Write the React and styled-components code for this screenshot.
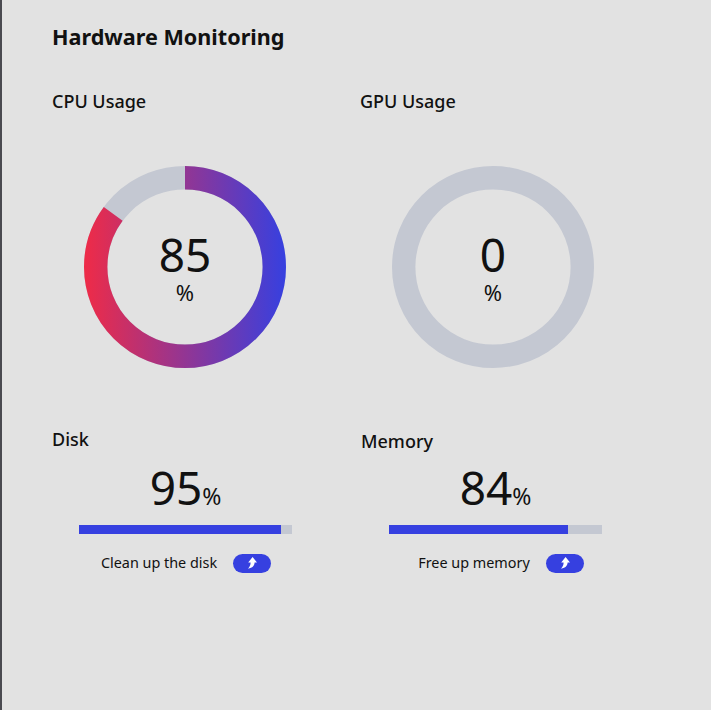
import React from 'react';
import styled, { createGlobalStyle } from 'styled-components';

const GlobalStyle = createGlobalStyle`
  html, body {
    margin: 0;
    padding: 0;
    background: #e2e2e2;
    font-family: "Noto Sans", "Open Sans", sans-serif;
    color: #111;
  }
`;

const Page = styled.div`
  box-sizing: border-box;
  width: 711px;
  height: 710px;
  overflow: hidden;
  background: #e2e2e2;
  border-left: 2px solid #4a4a50;
  padding: 21px 0 0 50px;
`;

const Title = styled.h1`
  margin: 0;
  font-size: 21.6px;
  line-height: 32px;
  font-weight: 700;
`;

const Grid = styled.div`
  display: grid;
  grid-template-columns: 308px 308px;
  margin-top: 36px;
`;

const Heading = styled.h2`
  margin: ${props => props.$top || 0}px 0 0;
  font-size: 18px;
  line-height: 24px;
  font-weight: 500;
`;

const RingCell = styled.section`
  height: 338px;
`;

const RingWrap = styled.div`
  position: relative;
  width: 202px;
  height: 202px;
  margin: 53px 0 0 32px;
`;

const RingLabel = styled.div`
  position: absolute;
  inset: 0;
  display: flex;
  flex-direction: column;
  align-items: center;
  justify-content: center;
`;

const RingValue = styled.div`
  font-size: 46px;
  line-height: 50px;
`;

const RingUnit = styled.div`
  font-size: 22px;
  line-height: 26px;
`;

const StatCell = styled.section`
  padding-left: ${props => props.$nudge}px;
`;

const StatValue = styled.div`
  display: flex;
  justify-content: center;
  align-items: baseline;
  width: 213px;
  margin: ${props => props.$top}px 0 0 ${props => props.$inset}px;
  font-size: 46px;
  line-height: 54px;
`;

const StatUnit = styled.span`
  font-size: 23px;
`;

const Bar = styled.div`
  width: 213px;
  height: 9px;
  margin: 2px 0 0 ${props => props.$inset}px;
  background: #c4c8d2;
`;

const BarFill = styled.div`
  height: 100%;
  background: #3640e0;
`;

const ActionRow = styled.div`
  display: flex;
  justify-content: center;
  align-items: center;
  gap: 16px;
  width: 213px;
  margin: 19px 0 0 ${props => props.$inset}px;
  font-size: 14.4px;
  line-height: 20px;
`;

const ActionButton = styled.button`
  display: flex;
  align-items: center;
  justify-content: center;
  width: 38px;
  height: 19px;
  padding: 0;
  border: 0;
  border-radius: 10px;
  background: #3640e0;
`;

const SIZE = 202;
const STROKE = 23.4;
const RADIUS = (SIZE - STROKE) / 2;
const CIRC = 2 * Math.PI * RADIUS;

function Ring({ id, value }) {
  return (
    <RingWrap>
      <svg width={SIZE} height={SIZE} viewBox={`0 0 ${SIZE} ${SIZE}`}>
        <defs>
          {/* the arc is rotated -90deg, so y here runs left to right on screen */}
          <linearGradient id={id} gradientUnits="userSpaceOnUse" x1="0" y1="0" x2="0" y2={SIZE}>
            <stop offset="0" stopColor="#ef2b47" />
            <stop offset="1" stopColor="#3640e0" />
          </linearGradient>
        </defs>
        <circle cx={SIZE / 2} cy={SIZE / 2} r={RADIUS} fill="none" stroke="#c4c8d2" strokeWidth={STROKE} />
        {value > 0 && (
          <circle
            cx={SIZE / 2}
            cy={SIZE / 2}
            r={RADIUS}
            fill="none"
            stroke={`url(#${id})`}
            strokeWidth={STROKE}
            strokeDasharray={`${(CIRC * value) / 100} ${CIRC}`}
            transform={`rotate(-90 ${SIZE / 2} ${SIZE / 2})`}
          />
        )}
      </svg>
      <RingLabel>
        <RingValue>{value}</RingValue>
        <RingUnit>%</RingUnit>
      </RingLabel>
    </RingWrap>
  );
}

function ArrowIcon() {
  return (
    <svg width="10" height="12" viewBox="0 0 10 12">
      <path d="M5.6 0 L10 5.6 L7.6 5.6 C7.6 8.6 5.6 11 1 11.8 C2.8 10 3.6 8 3.6 5.6 L1.2 5.6 Z" fill="#fff" />
    </svg>
  );
}

function Stat({ title, value, action, nudge, headingTop, valueTop, inset, actionInset }) {
  return (
    <StatCell $nudge={nudge}>
      <Heading $top={headingTop}>{title}</Heading>
      <StatValue $top={valueTop} $inset={inset}>
        {value}
        <StatUnit>%</StatUnit>
      </StatValue>
      <Bar $inset={inset}>
        <BarFill style={{ width: `${value}%` }} />
      </Bar>
      <ActionRow $inset={actionInset}>
        {action}
        <ActionButton>
          <ArrowIcon />
        </ActionButton>
      </ActionRow>
    </StatCell>
  );
}

export default function App() {
  return (
    <Page>
      <GlobalStyle />
      <Title>Hardware Monitoring</Title>
      <Grid>
        <RingCell>
          <Heading>CPU Usage</Heading>
          <Ring id="cpu-gradient" value={85} />
        </RingCell>
        <RingCell>
          <Heading>GPU Usage</Heading>
          <Ring id="gpu-gradient" value={0} />
        </RingCell>
        <Stat
          title="Disk"
          value={95}
          action="Clean up the disk"
          nudge={0}
          headingTop={0}
          valueTop={9}
          inset={27}
          actionInset={27.5}
        />
        <Stat
          title="Memory"
          value={84}
          action="Free up memory"
          nudge={1}
          headingTop={2}
          valueTop={7}
          inset={28}
          actionInset={33.5}
        />
      </Grid>
    </Page>
  );
}
